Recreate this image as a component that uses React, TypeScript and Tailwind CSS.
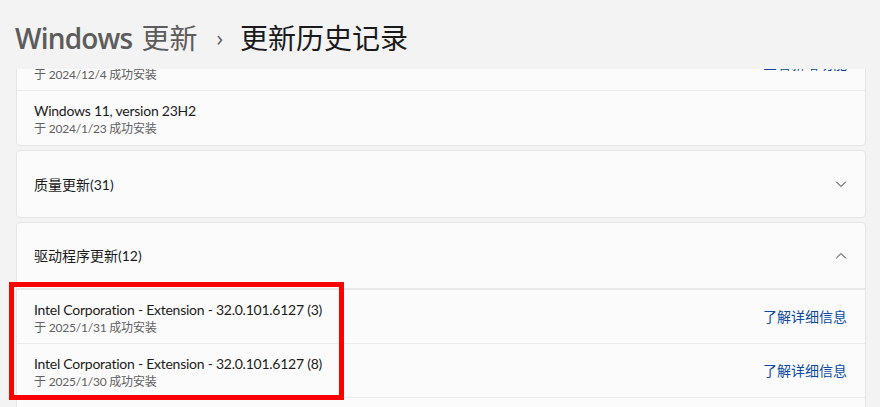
import React from "react";

const FONT = 'Lato, "Noto Sans CJK SC", sans-serif';
const HEAD = '"Open Sans", "Noto Sans CJK SC", sans-serif';

function ChevronDown() {
  return (
    <svg width="12" height="12" viewBox="0 0 12 12" fill="none">
      <path d="M1.5 4L6 8.5L10.5 4" stroke="#333" strokeWidth="1" strokeLinecap="round" strokeLinejoin="round" />
    </svg>
  );
}

function ChevronUp() {
  return (
    <svg width="12" height="12" viewBox="0 0 12 12" fill="none">
      <path d="M1.5 8L6 3.5L10.5 8" stroke="#333" strokeWidth="1" strokeLinecap="round" strokeLinejoin="round" />
    </svg>
  );
}

function Row({ title, date, link, border = true }: { title?: string; date: string; link?: string; border?: boolean }) {
  return (
    <div className={`flex h-[54px] items-center justify-between pl-[17px] pr-[18px] ${border ? "border-b border-[#ebebeb]" : ""}`}>
      <div className="flex h-full flex-col pt-[10px]">
        <div className="text-[14px] leading-[20px] tracking-[-0.25px] text-[#1b1b1b]">{title}</div>
        <div className="text-[12px] leading-[15px] tracking-[-0.2px] text-[#616161]">{date}</div>
      </div>
      {link && <div className="text-[14px] text-[#0b4aa2]">{link}</div>}
    </div>
  );
}

export default function App() {
  return (
    <div className="relative h-[407px] w-[880px] overflow-hidden bg-[#f3f3f3]" style={{ fontFamily: FONT }}>
      <div className="flex h-[69px] items-center pl-[15px] pt-[6px] text-[28px]" style={{ fontFamily: HEAD }}>
        <span className="font-semibold tracking-[-0.8px] text-[#5c5c5c]">Windows</span>
        <span className="ml-[9px] text-[#5c5c5c]">更新</span>
        <span className="ml-[19px] mr-[17px] text-[22px] text-[#5c5c5c]">›</span>
        <span className="text-[#1a1a1a]">更新历史记录</span>
      </div>
      <div className="h-[338px] overflow-hidden">
        <div className="-mt-[33px] flex flex-col gap-[4px] pl-[16px] pr-[14px]">
          <div className="rounded-[4px] border border-[#e5e5e5] bg-[#fbfbfb]">
            <Row title="Windows 11, version 24H2" date="于 2024/12/4 成功安装" link="查看新增功能" />
            <Row title="Windows 11, version 23H2" date="于 2024/1/23 成功安装" border={false} />
          </div>
          <div className="flex h-[68px] items-center justify-between rounded-[4px] border border-[#e5e5e5] bg-[#fbfbfb] pl-[17px] pr-[18px]">
            <span className="text-[14px] text-[#1b1b1b]">质量更新(31)</span>
            <ChevronDown />
          </div>
          <div className="rounded-t-[4px] border border-[#e5e5e5] bg-[#fbfbfb]">
            <div className="flex h-[67px] items-center justify-between border-b-2 border-[#e8e8e8] pl-[17px] pr-[18px]">
              <span className="text-[14px] text-[#1b1b1b]">驱动程序更新(12)</span>
              <ChevronUp />
            </div>
            <Row title="Intel Corporation - Extension - 32.0.101.6127 (3)" date="于 2025/1/31 成功安装" link="了解详细信息" />
            <Row title="Intel Corporation - Extension - 32.0.101.6127 (8)" date="于 2025/1/30 成功安装" link="了解详细信息" />
            <Row title="Intel Corporation - Extension - 32.0.101.6127 (1)" date="于 2025/1/29 成功安装" link="了解详细信息" />
          </div>
        </div>
      </div>
      <div className="absolute left-[9px] top-[282px] h-[118px] w-[335px] border-[5px] border-[#ff0000]" />
    </div>
  );
}
